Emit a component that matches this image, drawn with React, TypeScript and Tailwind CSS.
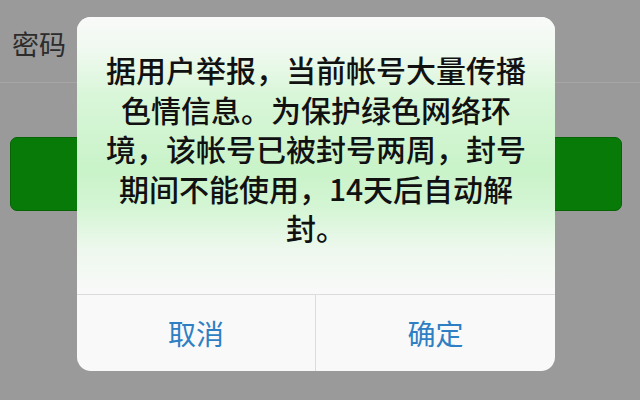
export default function App() {
  const lines = [
    "据用户举报，当前帐号大量传播",
    "色情信息。为保护绿色网络环",
    "境，该帐号已被封号两周，封号",
    "期间不能使用，14天后自动解",
    "封。",
  ];

  return (
    <div
      className="relative w-[640px] h-[400px] overflow-hidden bg-[#9a9a9a]"
      style={{ fontFamily: '"Noto Sans CJK SC", "Noto Sans", sans-serif' }}
    >
      {/* page behind the alert */}
      <div className="flex items-center h-[83px] pt-[7px] pl-[12px] border-b border-[#a6a6a6] text-[27px] text-[#2c2c2c]">
        密码
      </div>
      <div className="mt-[54px] ml-[10px] w-[612px] h-[74px] rounded-[7px] bg-[#087a08] border border-[#066306]" />

      {/* alert */}
      <div className="absolute left-[77px] top-[17px] w-[478px] h-[354px] rounded-[14px] overflow-hidden bg-[#f9f9f9] flex flex-col">
        <div className="h-[277px] pt-[33px] bg-[linear-gradient(180deg,#f9faf9_0%,#f0f9f0_12%,#d9f6d9_28%,#c9f3c9_55%,#d3f5d3_68%,#eef8ee_84%,#f9f9f9_100%)]">
          <div className="flex flex-col items-center text-[30px] leading-[39.5px] font-medium text-[#111]">
            {lines.map((l, i) => (
              <div key={i} className="whitespace-nowrap">
                {l}
              </div>
            ))}
          </div>
        </div>
        <div className="flex-1 grid grid-cols-[239px_1fr] border-t border-[#dcdcdc]">
          <button className="flex items-center justify-center border-r border-[#dcdcdc] text-[28px] text-[#2f7fc4]">
            取消
          </button>
          <button className="flex items-center justify-center text-[28px] text-[#2f7fc4]">
            确定
          </button>
        </div>
      </div>
    </div>
  );
}
